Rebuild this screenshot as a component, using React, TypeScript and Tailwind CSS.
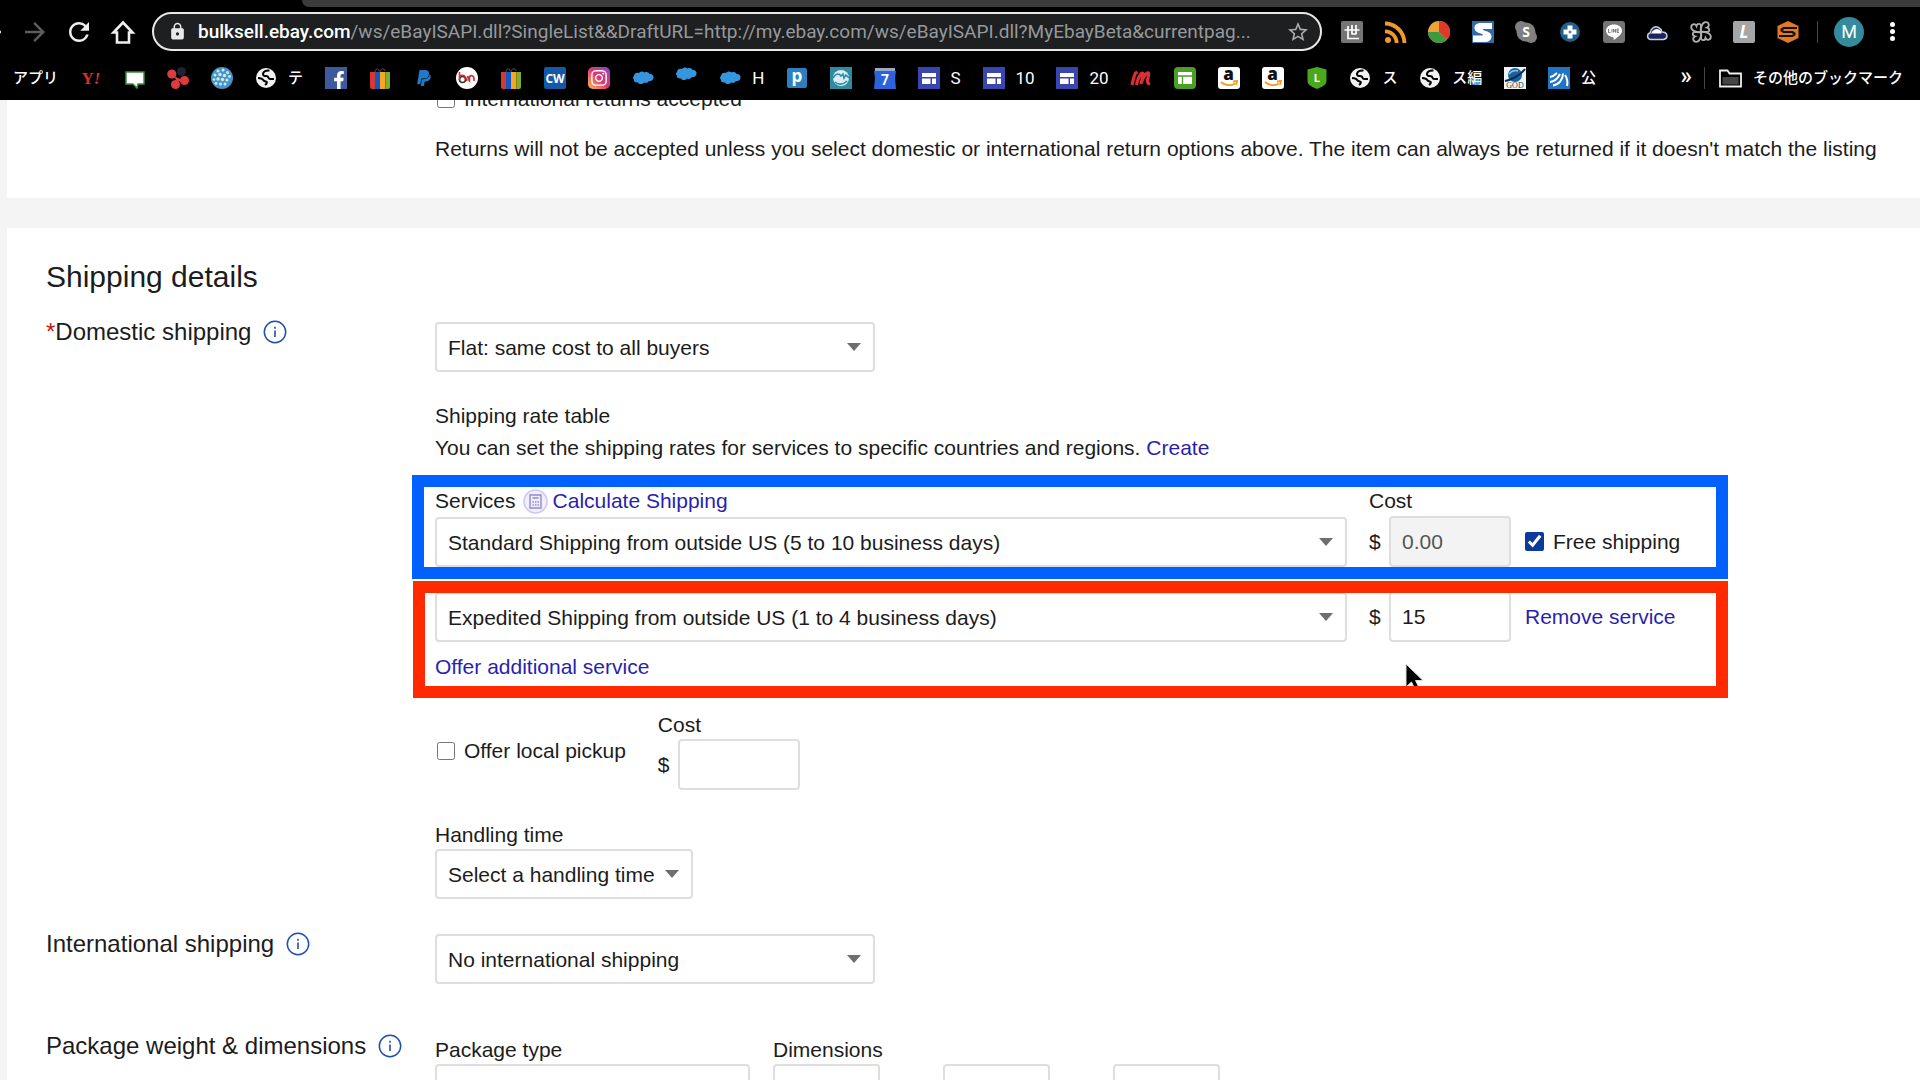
import { ReactNode, useState } from "react";
import { FaFacebookF, FaInstagram, FaPaypal } from "react-icons/fa";
import { MdArrowBack, MdArrowForward, MdLock, MdRefresh, MdRssFeed, MdStarBorder } from "react-icons/md";
import clsx from "clsx";

interface ToolbarItem {
  name: string;
  icon: ReactNode;
  label?: string;
}

function Svg({ children, className }: { children: ReactNode; className?: string }) {
  return (
    <svg viewBox="0 0 22 22" className={clsx("h-[22px] w-[22px] shrink-0", className)} aria-hidden="true">
      {children}
    </svg>
  );
}

// Favicons

const globeIcon = (
  <Svg>
    <circle cx="11" cy="11" r="10" fill="#f1f1f1" />
    <path
      d="M14.500 3.500c-3.500-.2-6 1-6.500 3.200-.4 2 1.400 2.300 3.200 2.400 1.600.1 2.300.9 2.600 2.100.3 1 1.500.9 5.200.8M3 11c3 .2 4.500.8 5.200 2 .6 1.200 2 1.300 3.200 1.700 1 .5.3 2-1.400 3.300"
      fill="none"
      stroke="#000"
      strokeWidth="2"
    />
  </Svg>
);

const ebayBagIcon = (
  <Svg>
    <path d="M6 5c0-4 4-4 4-1M11 5c0-4 5-4 5-1" fill="none" stroke="#555" strokeWidth="1" />
    <path d="M1 5h5v17H3a2 2 0 0 1-2-2z" fill="#d63a2f" />
    <path d="M6 5h5v17H6z" fill="#1257c4" />
    <path d="M11 5h5.500v17H11z" fill="#f5a623" />
    <path d="M16.500 5H21v15a2 2 0 0 1-2 2h-2.500z" fill="#7fae2c" />
  </Svg>
);

const cloudIcon = (
  <Svg>
    <path
      d="M2 9c0-3 3-4 5-3 1.500-2 4-2 5.500-.5C15 4.500 17 5.500 17.500 7 20 6.500 22 8.500 21.500 11c-.5 2.600-3 3.500-4.500 3-1 2-3.500 2.300-5 1.500-1.500 2-5 2-6 0C3.500 16 1.500 14.500 2 12.500.5 11.500.8 9.800 2 9z"
      fill="#3596e0"
    />
  </Svg>
);

const siteIcon = (
  <Svg>
    <path d="M0 0h22v22H0z" fill="#3a45ad" />
    <path d="M4 6h14v4H4zM4 11.500h8.500V17H4zM14 11.500h4V17h-4z" fill="#fff" />
  </Svg>
);

const amazonIcon = (
  <Svg>
    <rect width="22" height="22" rx="3" fill="#fff" />
    <text x="10.500" y="13" textAnchor="middle" fontFamily="Open Sans" fontWeight="800" fontSize="17" fill="#111">
      a
    </text>
    <path d="M3 15c4 4 10 4 14 1.500M15 14.500l4-.5-.8 3.800" fill="none" stroke="#f39a1f" strokeWidth="1.800" />
  </Svg>
);

const bookmarks: ToolbarItem[] = [
  {
    name: "Yahoo",
    icon: (
      <Svg>
        <text x="11" y="17" textAnchor="middle" fontFamily="Liberation Serif" fontWeight="bold" fontSize="17" fill="#d5302c">
          Y<tspan fontStyle="italic">!</tspan>
        </text>
      </Svg>
    ),
  },
  {
    name: "Chat",
    icon: (
      <Svg>
        <path d="M2 5h18v12h-6l-1 4-4-4H2z" fill="#fff" stroke="#3c8f3c" strokeWidth="1.500" />
      </Svg>
    ),
  },
  {
    name: "Clover",
    icon: (
      <Svg>
        <circle cx="14.500" cy="4.500" r="4.500" fill="#1b2434" />
        <circle cx="4.800" cy="7" r="4.600" fill="#df3a3f" />
        <circle cx="17.500" cy="13.500" r="4.500" fill="#df3a3f" />
        <circle cx="8.500" cy="17.500" r="4.500" fill="#df3a3f" />
        <path d="M7 9l3 6 5-2z" fill="#df3a3f" />
      </Svg>
    ),
  },
  {
    name: "Sphere",
    icon: (
      <Svg>
        <circle cx="11" cy="11" r="11" fill="#4b93c4" />
        <g fill="#c5ecf5">
          <circle cx="7" cy="4" r="1.500" />
          <circle cx="12" cy="3" r="1.500" />
          <circle cx="16.500" cy="5.500" r="1.500" />
          <circle cx="4" cy="8" r="1.500" />
          <circle cx="9" cy="7.500" r="1.700" />
          <circle cx="13.500" cy="8.500" r="1.700" />
          <circle cx="18.500" cy="9.500" r="1.400" />
          <circle cx="3" cy="12.500" r="1.300" />
          <circle cx="7" cy="12" r="1.700" />
          <circle cx="11.500" cy="12.500" r="1.700" />
          <circle cx="16" cy="13" r="1.600" />
          <circle cx="5" cy="16.500" r="1.400" />
          <circle cx="9.500" cy="17" r="1.500" />
          <circle cx="14" cy="17" r="1.500" />
        </g>
      </Svg>
    ),
  },
  { name: "テ", icon: globeIcon, label: "テ" },
  {
    name: "Facebook",
    icon: (
      <span className="flex h-[22px] w-[22px] items-end justify-end bg-[#3d5a9b] pr-[2px]">
        <FaFacebookF className="h-[18px] w-[12px] text-white" />
      </span>
    ),
  },
  { name: "eBay", icon: ebayBagIcon },
  {
    name: "PayPal",
    icon: (
      <span className="flex h-[22px] w-[22px] items-center justify-center">
        <FaPaypal className="h-[18px] w-[18px] text-[#2478c8]" />
      </span>
    ),
  },
  {
    name: "Buyma",
    icon: (
      <Svg>
        <circle cx="11" cy="11" r="11" fill="#fff" />
        <circle cx="6.500" cy="12.500" r="3" fill="none" stroke="#333" strokeWidth="1.600" />
        <path d="M3.500 5v8M3.500 9.500c4-3 6.500 0 7.500 4.500M11.500 9c1 4 2 5 2 5V9.500c1.500-1.500 4.500-1 4.500 2V14" fill="none" stroke="#d22c2c" strokeWidth="1.600" />
      </Svg>
    ),
  },
  { name: "eBay seller", icon: ebayBagIcon },
  {
    name: "Crowdworks",
    icon: (
      <Svg>
        <rect width="22" height="22" rx="2" fill="#1458a8" />
        <text x="11" y="16" textAnchor="middle" fontFamily="Open Sans" fontWeight="bold" fontSize="12" fill="#fff">
          CW
        </text>
      </Svg>
    ),
  },
  {
    name: "Instagram",
    icon: (
      <span className="flex h-[22px] w-[22px] items-center justify-center rounded-[5px] bg-linear-to-tr from-[#fdb749] via-[#e0336d] to-[#8a3ac8]">
        <FaInstagram className="h-[18px] w-[18px] text-white" />
      </span>
    ),
  },
  { name: "Cloud", icon: cloudIcon },
  { name: "Cloud app", icon: <span className="pb-2">{cloudIcon}</span> },
  { name: "H", icon: cloudIcon, label: "H" },
  {
    name: "P",
    icon: (
      <Svg>
        <rect x="1" y="1" width="20" height="20" rx="2" fill="#2e7fc0" />
        <text x="11" y="15" textAnchor="middle" fontFamily="Open Sans" fontWeight="bold" fontSize="17" fill="#fff">
          p
        </text>
      </Svg>
    ),
  },
  {
    name: "Terapeak",
    icon: (
      <Svg>
        <path d="M0 0h22v22H0z" fill="#2f8ba0" />
        <circle cx="11" cy="11" r="8" fill="#d9eef2" />
        <path d="M3 11c3-5 6-5 8-2l2-2 1 4 2-3 3 3M5 15c3 3 8 3 12-1" fill="none" stroke="#2f8ba0" strokeWidth="1.600" />
      </Svg>
    ),
  },
  {
    name: "Calendar",
    icon: (
      <Svg>
        <path d="M1 1h20v5H1z" fill="#9aa9c8" />
        <path d="M0 4h22l-1 7 1 11H0l1-11z" fill="#2c63dc" />
        <text x="11" y="18" textAnchor="middle" fontFamily="Roboto" fontWeight="bold" fontSize="14" fill="#fff">
          7
        </text>
      </Svg>
    ),
  },
  { name: "S", icon: siteIcon, label: "S" },
  { name: "10", icon: siteIcon, label: "10" },
  { name: "20", icon: siteIcon, label: "20" },
  {
    name: "Mercari",
    icon: (
      <Svg>
        <path
          d="M2 18c1-5 2-9 3.500-12l2-.8M6.500 18c1-5 2.500-9 5-11.500 1.500-.8 2 .2 1.500 2L11 17M12 14c1.500-4 3-6.500 5-8 1.600-.6 2 .6 1.500 2.500-1 4-2 8 1.500 8.500"
          fill="none"
          stroke="#dc2f33"
          strokeWidth="3.200"
          strokeLinejoin="round"
        />
      </Svg>
    ),
  },
  {
    name: "Tables",
    icon: (
      <Svg>
        <rect width="22" height="22" rx="4" fill="#4a9f24" />
        <path d="M4 5h14v12H4z" fill="#fff" />
        <path d="M4 9h14M8.500 9v8" stroke="#4a9f24" strokeWidth="1.300" />
      </Svg>
    ),
  },
  { name: "Amazon", icon: amazonIcon },
  { name: "Amazon seller", icon: amazonIcon },
  {
    name: "Shield",
    icon: (
      <Svg>
        <path d="M1.500 2.500L11 0l9.500 2.500V14c0 4-5 6-9.500 8-4.500-2-9.500-4-9.500-8z" fill="#4ba81c" />
        <text x="11" y="15" textAnchor="middle" fontFamily="Roboto" fontWeight="bold" fontSize="11" fill="#fff">
          L
        </text>
      </Svg>
    ),
  },
  { name: "ス", icon: globeIcon, label: "ス" },
  { name: "ス編", icon: globeIcon, label: "ス編" },
  {
    name: "God",
    icon: (
      <Svg>
        <path d="M0 0h22v22H0z" fill="#eef3f8" />
        <circle cx="11" cy="8" r="7" fill="#17629f" />
        <path d="M1 14C6 13 16 9 21 2" fill="none" stroke="#0b2c52" strokeWidth="2" />
        <path d="M5 7c2-3 6-4 9-3" fill="none" stroke="#8fc4e8" strokeWidth="1.500" />
        <text x="11" y="21" textAnchor="middle" fontFamily="Liberation Serif" fontSize="8" fill="#444">
          GOD
        </text>
      </Svg>
    ),
  },
  {
    name: "公",
    label: "公",
    icon: (
      <Svg>
        <path d="M0 0h22v22H0z" fill="#2173c4" />
        <path
          d="M2 10c3-.5 5-2 7-4M2 15c5-.5 8-4 10-8M5 18.500c6-1 10-6 10-12M17 8c2 3 3 7 2 11"
          fill="none"
          stroke="#fff"
          strokeWidth="2"
        />
      </Svg>
    ),
  },
];

const extensions: ToolbarItem[] = [
  {
    name: "世",
    icon: (
      <Svg>
        <rect width="22" height="22" rx="2" fill="#757575" />
        <path d="M3.500 9h15M7 5v12.500h11M11 4v9.500M15 4v9.500M11 13h4" fill="none" stroke="#fff" strokeWidth="1.700" />
      </Svg>
    ),
  },
  { name: "RSS", icon: <MdRssFeed className="h-[22px] w-[22px] text-[#ef9a2b]" viewBox="4 4 16 16" /> },
  {
    name: "Chart",
    icon: (
      <Svg>
        <circle cx="11" cy="11" r="11" fill="#f0a23a" />
        <path d="M11 11V0a11 11 0 0 1 8 18.500z" fill="#dd3a2c" />
        <path d="M11 11l8 7.500A11 11 0 0 1 0 11z" fill="#3e9a3e" />
      </Svg>
    ),
  },
  {
    name: "Sheet",
    icon: (
      <Svg>
        <path d="M0 0h22v22H0z" fill="#2f6ba5" />
        <path
          d="M20 2H9C4 2 2 4.500 2.500 7.500 3 11 7 12 10 13c1.500.5 1 1.500 0 1.500H1V21h11c5 0 7.500-2 7.500-5.500S16 10.500 12 9.500C10.500 9 10.500 8 12 8h8z"
          fill="#fff"
        />
      </Svg>
    ),
  },
  {
    name: "Skype",
    icon: (
      <Svg>
        <circle cx="6" cy="6" r="6" fill="#808080" />
        <circle cx="16" cy="16" r="6" fill="#808080" />
        <circle cx="11" cy="11" r="9.500" fill="#808080" />
        <text x="11" y="16" textAnchor="middle" fontFamily="Open Sans" fontWeight="bold" fontSize="14" fill="#fff">
          S
        </text>
      </Svg>
    ),
  },
  {
    name: "Health",
    icon: (
      <Svg>
        <circle cx="11" cy="11" r="10" fill="#245f8a" />
        <path d="M8.500 4.500h5v4h4v5h-4v4h-5v-4h-4v-5h4z" fill="#fff" />
        <path d="M9.500 11h3M11 9.500v3" stroke="#245f8a" strokeWidth="1" />
      </Svg>
    ),
  },
  {
    name: "LINE",
    icon: (
      <Svg>
        <rect width="22" height="22" rx="3" fill="#757575" />
        <path d="M11 3.500c4.500 0 8 2.700 8 6.200 0 3-3.500 6.300-8.500 9.300.5-1.500.3-2.500-.8-3C6 15.500 3 13 3 9.700c0-3.500 3.500-6.200 8-6.200z" fill="#fff" />
        <path d="M5.500 8v3.500h2M9 8v3.500M10.500 11.500V8l2 3.500V8M16 8h-2v3.500h2M14 9.800h2" fill="none" stroke="#757575" strokeWidth=".9" />
      </Svg>
    ),
  },
  {
    name: "Cloud drive",
    icon: (
      <Svg>
        <path
          d="M4.500 18.500C1 18 .5 13 4 12c1-5 5-7.500 8.500-5.500 2 1 3 2.500 3.500 4.500 6 0 6.500 6.500 1.500 7.500z"
          fill="#1b2461"
          stroke="#c9cde0"
          strokeWidth="1.500"
        />
        <path d="M5 12.500c2-4 5-5.500 8-4 1.500.8 2.500 2 2.500 4z" fill="#fff" />
      </Svg>
    ),
  },
  {
    name: "Pinwheel",
    icon: (
      <Svg>
        <g fill="none" stroke="#b0b0b0" strokeWidth="1.800">
          <path d="M11 11C8 11.500 1.500 10.500 1.200 6.500 1 3 5 2 6.500 5c.4-2.800 4.500-3 4.500 0 0 2-1 4 0 6z" />
          <path d="M11 11c-.5-3 .5-9.500 4.500-9.800C19 1 20 5 17 6.500c2.800.4 3 4.500 0 4.500-2 0-4-1-6 0z" />
          <path d="M11 11c3-.5 9.500.5 9.800 4.500C21 19 17 20 15.500 17c-.4 2.800-4.500 3-4.500 0 0-2 1-4 0-6z" />
          <path d="M11 11c.5 3-.5 9.500-4.500 9.800C3 21 2 17 5 15.500c-2.800-.4-3-4.500 0-4.500 2 0 4 1 6 0z" />
        </g>
      </Svg>
    ),
  },
  {
    name: "L",
    icon: (
      <Svg>
        <rect width="22" height="22" rx="2" fill="#a6a6a6" />
        <text x="11" y="17" textAnchor="middle" fontFamily="Open Sans" fontWeight="bold" fontStyle="italic" fontSize="17" fill="#fff">
          L
        </text>
      </Svg>
    ),
  },
  {
    name: "Seller tool",
    icon: (
      <Svg>
        <path d="M11 0l10.500 5v12L11 22 .5 17V5z" fill="#e07a25" />
        <path d="M20 7H6.500L4.500 8.500v1L6.500 11h9l2 1.500v1l-2 1.500H2" fill="none" stroke="#111" strokeWidth="2.200" />
      </Svg>
    ),
  },
];

function BrowserBar() {
  return (
    <header className="relative z-20 bg-black font-['Roboto','Noto_Sans_CJK_JP',sans-serif] text-white">
      <div className="ml-[302px] h-[7px] rounded-bl-lg bg-[#3b3b3b]" />
      <div className="flex h-[49px] items-center overflow-hidden">
        <nav className="-ml-6 flex items-center gap-[14px] pr-[14px]" aria-label="Browser">
          <button aria-label="Back">
            <MdArrowBack className="h-[30px] w-[30px] text-[#ddd]" />
          </button>
          <button aria-label="Forward">
            <MdArrowForward className="h-[30px] w-[30px] text-[#5d5d5d]" />
          </button>
          <button aria-label="Reload">
            <MdRefresh className="h-[30px] w-[30px] text-[#eee]" />
          </button>
          <button aria-label="Home">
            <svg viewBox="0 0 30 30" className="h-[30px] w-[30px]" aria-hidden="true">
              <path d="M15 5.500L5.500 15.500H9V25.500H21V15.500h3.500z" fill="none" stroke="#eee" strokeWidth="2.600" />
            </svg>
          </button>
        </nav>
        <div className="flex h-[39px] min-w-0 flex-1 items-center rounded-full border-2 border-[#e8e8e8] bg-[#1d1f21] pr-[10px] pl-[14px]">
          <MdLock className="h-[19px] w-[19px] shrink-0 text-[#e8e8e8]" />
          <a href="#address" className="min-w-0 flex-1 pl-[11px] text-[19px] whitespace-nowrap text-[#96999c]">
            <span className="font-medium text-white">bulksell.ebay.com</span>
            /ws/eBayISAPI.dll?SingleList&amp;&amp;DraftURL=http://my.ebay.com/ws/eBayISAPI.dll?MyEbayBeta&amp;currentpag...
          </a>
          <button aria-label="Bookmark this page">
            <MdStarBorder className="h-[24px] w-[24px] text-[#aaa]" />
          </button>
        </div>
        <ul className="ml-[19px] flex w-[458px] shrink-0 items-center justify-between">
          {extensions.map((item) => (
            <li key={item.name}>
              <button className="flex items-center" aria-label={item.name}>
                {item.icon}
              </button>
            </li>
          ))}
        </ul>
        <div className="ml-[18px] h-[22px] w-px bg-[#444]" />
        <button className="ml-4 h-[30px] w-[30px] shrink-0 rounded-full bg-[#348b9b] text-[18px]">M</button>
        <button className="mr-6 ml-[26px] flex w-[6px] shrink-0 flex-col gap-[2px]" aria-label="Menu">
          <i className="h-[5px] w-[5px] rounded-full bg-white" />
          <i className="h-[5px] w-[5px] rounded-full bg-white" />
          <i className="h-[5px] w-[5px] rounded-full bg-white" />
        </button>
      </div>
      <nav className="flex h-[44px] items-center pr-[17px] pl-[13px] text-[15px] font-medium" aria-label="Bookmarks">
        <ul className="flex min-w-0 flex-1 items-center justify-between">
          <li>
            <a href="#apps">アプリ</a>
          </li>
          {bookmarks.map((item) => (
            <li key={item.name}>
              <a href="#bookmark" aria-label={item.name} className="flex items-center gap-[11px]">
                {item.icon}
                {item.label && (
                  <span className={clsx(/^[A-Z0-9]/.test(item.label) && "text-[17px] font-normal")}>{item.label}</span>
                )}
              </a>
            </li>
          ))}
        </ul>
        <button className="ml-[84px] pb-1 text-[24px] leading-none" aria-label="More bookmarks">
          »
        </button>
        <div className="ml-3 h-[22px] w-px bg-[#444]" />
        <a href="#others" className="flex items-center gap-[11px] pl-[14px]">
          <svg viewBox="0 0 23 19" className="h-[19px] w-[23px]" aria-hidden="true">
            <path d="M1 1.500h7.500l2 3H22V17.500H1z" fill="none" stroke="#eee" strokeWidth="1.800" />
            <path d="M3.500 8h16v7.500h-16z" fill="#444" />
          </svg>
          その他のブックマーク
        </a>
      </nav>
    </header>
  );
}

function InfoButton({ about }: { about: string }) {
  return (
    <button aria-label={`Help: ${about}`}>
      <svg viewBox="0 0 24 24" className="h-6 w-6" fill="none" stroke="#1f4fb0" aria-hidden="true">
        <circle cx="12" cy="12" r="10.700" strokeWidth="1.500" />
        <path d="M12 10.500v6.500M12 6.800v2" strokeWidth="1.600" />
      </svg>
    </button>
  );
}

function Row({ label, required, children }: { label: string; required?: boolean; children: ReactNode }) {
  return (
    <div className="grid grid-cols-[389px_minmax(0,1fr)]">
      <div className="flex h-7 items-center gap-3 text-[24px] whitespace-nowrap">
        <h3>
          {required && <span className="text-[#c4161c]">*</span>}
          {label}
        </h3>
        <InfoButton about={label} />
      </div>
      <div className="pt-1">{children}</div>
    </div>
  );
}

function Select({ id, label, value, className }: { id: string; label?: string; value: string; className?: string }) {
  return (
    <div className={clsx("relative", className)}>
      <select
        id={id}
        aria-label={label}
        className="h-[50px] w-full appearance-none rounded-[4px] border-2 border-[#dedede] bg-white pt-[2px] pr-7 pl-[11px]"
      >
        <option>{value}</option>
      </select>
      <svg viewBox="0 0 14 8" className="pointer-events-none absolute top-[21px] right-[14px] h-2 w-[14px]" aria-hidden="true">
        <path d="M0 0h14L7 8z" fill="#6e6e6e" />
      </svg>
    </div>
  );
}

const fieldClass = "rounded-[4px] border-2 border-[#dedede] px-[11px]";

function CostInput({ id, label, value, disabled }: { id: string; label?: string; value: string; disabled?: boolean }) {
  const [amount, setAmount] = useState(value);
  return (
    <div className="flex items-center">
      <span className="w-5">$</span>
      <input
        id={id}
        aria-label={label}
        value={amount}
        disabled={disabled}
        onChange={(e) => setAmount(e.target.value)}
        className={clsx(fieldClass, "h-[51px] w-[122px]", disabled ? "bg-[#f3f3f3] text-[#555]" : "bg-white")}
      />
    </div>
  );
}

function Services() {
  return (
    <div className="mt-[22px] max-w-[1281px]">
      <div className="relative">
        <div className="flex h-[30px] items-center">
          <div className="flex flex-1 items-center">
            <label htmlFor="service-1">Services</label>
            <a href="#calculate" className="ml-[7px] flex items-center gap-[5px] text-[#2a1fae]">
              <svg viewBox="0 0 25 25" className="h-[25px] w-[25px]" fill="none" aria-hidden="true">
                <circle cx="12.500" cy="12.500" r="11.500" fill="#f1effc" stroke="#cdc7f3" strokeWidth="1.500" />
                <path d="M7 6h11v13H7zM9.500 9h6" stroke="#9089d4" strokeWidth="1.400" />
                <path d="M9.500 13h1.500M12 13h1.500M14.500 13H16M9.500 16h1.500M12 16h1.500M14.500 16H16" stroke="#9089d4" strokeWidth="1.400" />
              </svg>
              Calculate Shipping
            </a>
          </div>
          <label htmlFor="cost-1" className="w-[347px]">
            Cost
          </label>
        </div>
        <div className="flex items-end">
          <Select id="service-1" value="Standard Shipping from outside US (5 to 10 business days)" className="flex-1" />
          <div className="flex w-[369px] items-center gap-[14px] pl-[22px]">
            <CostInput id="cost-1" value="0.00" disabled />
            <label className="flex items-center gap-[9px] whitespace-nowrap">
              <input type="checkbox" defaultChecked className="h-[19px] w-[19px] accent-[#0a3a9c]" />
              Free shipping
            </label>
          </div>
        </div>
        <div className="pointer-events-none absolute -top-[11px] -right-3 -bottom-3 -left-[23px] border-[12px] border-[#0061ff]" />
      </div>

      <div className="relative mt-6">
        <div className="flex items-end">
          <Select
            id="service-2"
            label="Service 2"
            value="Expedited Shipping from outside US (1 to 4 business days)"
            className="flex-1"
          />
          <div className="flex w-[369px] items-center gap-[14px] pl-[22px]">
            <CostInput id="cost-2" label="Service 2 cost" value="15" />
            <a href="#remove" className="whitespace-nowrap text-[#2a1fae]">
              Remove service
            </a>
          </div>
        </div>
        <div className="flex h-[50px] items-center">
          <a href="#add" className="text-[#2a1fae]">
            Offer additional service
          </a>
        </div>
        <svg viewBox="0 0 20 30" className="absolute right-[291px] -bottom-px h-[30px] w-5" aria-hidden="true">
          <path d="M1 1v23l5.500-5 4 8.500 4-2-4-8H18z" fill="#000" stroke="#ddd" strokeWidth="1" />
        </svg>
        <div className="pointer-events-none absolute -top-[10px] -right-3 -bottom-[6px] -left-[22px] border-[12px] border-[#ff2a00]" />
      </div>
    </div>
  );
}

export default function App() {
  return (
    <div className="flex h-screen flex-col overflow-hidden bg-[#f4f4f4] font-['Liberation_Sans',Arial,sans-serif] text-[21px] leading-7 text-[#1c1c1c]">
      <BrowserBar />
      <main className="min-h-0 flex-1 overflow-hidden pl-[7px]">
        <section className="-mt-[15px] bg-white pb-[35px] pl-[428px]">
          <label className="flex items-center gap-[9px] pl-[2px]">
            <input type="checkbox" className="h-[18px] w-[18px]" />
            International returns accepted
          </label>
          <p className="mt-[22px] whitespace-nowrap">
            Returns will not be accepted unless you select domestic or international return options above. The item can always
            be returned if it doesn't match the listing
          </p>
        </section>

        <section className="mt-[30px] bg-white pt-[31px] pl-[39px]">
          <h2 className="mb-[23px] text-[30px] leading-9">Shipping details</h2>

          <Row label="Domestic shipping" required>
            <Select id="domestic" label="Domestic shipping" value="Flat: same cost to all buyers" className="max-w-[440px]" />
            <div className="mt-7 leading-8">
              <p>Shipping rate table</p>
              <p>
                You can set the shipping rates for services to specific countries and regions.{" "}
                <a href="#create" className="text-[#2a1fae]">
                  Create
                </a>
              </p>
            </div>
            <Services />
            <div className="mt-[19px] flex items-center gap-8">
              <label className="flex items-center gap-[9px] pl-[2px]">
                <input type="checkbox" className="h-[18px] w-[18px]" />
                Offer local pickup
              </label>
              <div>
                <label htmlFor="pickup-cost" className="block">
                  Cost
                </label>
                <CostInput id="pickup-cost" value="" />
              </div>
            </div>
            <label htmlFor="handling" className="mt-[31px] block">
              Handling time
            </label>
            <Select id="handling" value="Select a handling time" className="max-w-[258px]" />
          </Row>

          <div className="mt-[31px]">
            <Row label="International shipping">
              <Select id="international" label="International shipping" value="No international shipping" className="max-w-[440px]" />
            </Row>
          </div>

          <div className="mt-12">
            <Row label="Package weight & dimensions">
              <div className="flex gap-[23px]">
                <div>
                  <label htmlFor="package-type" className="block">
                    Package type
                  </label>
                  <select id="package-type" className={clsx(fieldClass, "h-[50px] w-[315px] appearance-none")} />
                </div>
                <div>
                  <label htmlFor="length" className="block">
                    Dimensions
                  </label>
                  <div className="flex gap-[63px]">
                    <input id="length" className={clsx(fieldClass, "h-[50px] w-[107px]")} />
                    <input aria-label="Width" className={clsx(fieldClass, "h-[50px] w-[107px]")} />
                    <input aria-label="Height" className={clsx(fieldClass, "h-[50px] w-[107px]")} />
                  </div>
                </div>
              </div>
            </Row>
          </div>
        </section>
      </main>
    </div>
  );
}
